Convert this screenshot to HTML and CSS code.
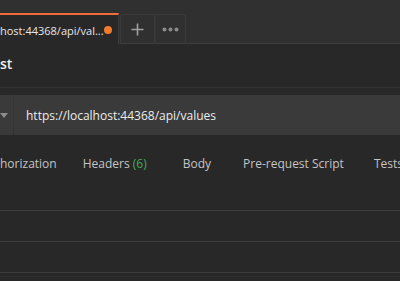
FILE: index.html
```html
<!DOCTYPE html>
<html>
<head>
<meta charset="utf-8">
<link rel="stylesheet" href="styles.css">
</head>
<body>
<div class="tabbar">
  <div class="tab active">
    <span class="tab-title">host:44368/api/val...</span>
    <span class="dot"></span>
  </div>
  <div class="tab-btn plus">
    <svg width="13" height="13" viewBox="0 0 13 13"><path d="M6.5 0.5v12M0.5 6.5h12" stroke="#a0a0a0" stroke-width="1.6"/></svg>
  </div>
  <div class="tab-btn more">
    <svg width="17" height="5" viewBox="0 0 17 5"><circle cx="2.5" cy="2.5" r="2" fill="#8a8a8a"/><circle cx="8.5" cy="2.5" r="2" fill="#8a8a8a"/><circle cx="14.5" cy="2.5" r="2" fill="#8a8a8a"/></svg>
  </div>
  <div class="tab-fill"></div>
</div>
<div class="title-row"><span class="title">st</span></div>
<div class="url-row">
  <div class="method">
    <svg width="8" height="5" viewBox="0 0 8 5"><path d="M0 0h8L4 5z" fill="#8c8c8c"/></svg>
  </div>
  <div class="url">https://localhost:44368/api/values</div>
</div>
<div class="req-tabs">
  <span class="rt rt-auth">horization</span>
  <span class="rt rt-headers">Headers <span class="count">(6)</span></span>
  <span class="rt rt-body">Body</span>
  <span class="rt">Pre-request Script</span>
  <span class="rt">Tests</span>
</div>
<div class="rows">
  <div class="row"></div>
  <div class="row"></div>
  <div class="row last"></div>
</div>
</body>
</html>
```
FILE: styles.css
```css
html, body {
  margin: 0;
  padding: 0;
  background: #282828;
  overflow: hidden;
  font-family: "Open Sans", "Noto Sans", sans-serif;
}
.tabbar {
  height: 44px;
  background: #303030;
  display: flex;
  align-items: flex-end;
}
.tab.active {
  box-sizing: border-box;
  width: 119px;
  height: 31px;
  background: #282828;
  border-top: 2px solid #f26b3a;
  border-right: 1px solid #3c3c3c;
  display: flex;
  align-items: center;
  flex-shrink: 0;
}
.tab-title {
  color: #e6e6e6;
  font-size: 11px;
  flex: 1;
  white-space: nowrap;
  padding-top: 1px;
}
.dot {
  flex-shrink: 0;
  width: 8px;
  height: 8px;
  border-radius: 50%;
  background: #f37b2e;
  margin-right: 8px;
  margin-top: 1px;
}
.tab-btn {
  box-sizing: border-box;
  height: 30px;
  width: 35px;
  border: 1px solid #3a3a3a;
  border-bottom: 1px solid #3e3e3e;
  display: flex;
  align-items: center;
  justify-content: center;
  flex-shrink: 0;
}
.tab-btn.plus {
  margin-left: 1px;
  border-radius: 3px 0 0 0;
}
.tab-btn.more {
  border-left: 1px solid #363636;
  width: 31px;
  border-radius: 0 3px 0 0;
}
.tab-fill {
  flex: 1;
  align-self: stretch;
  border-bottom: 1px solid #3e3e3e;
}
.title-row {
  height: 44px;
  box-sizing: border-box;
  border-bottom: 1px solid #333;
  display: flex;
  align-items: center;
  padding-bottom: 4px;
}
.title {
  color: #f0f0f0;
  font-size: 14px;
  font-weight: 600;
}
.url-row {
  margin-top: 7px;
  height: 40px;
  background: #3a3a3a;
  display: flex;
  align-items: center;
}
.method {
  width: 13px;
  align-self: stretch;
  border-right: 1px solid #333;
  display: flex;
  align-items: center;
}
.url {
  color: #ececec;
  font-size: 12px;
  margin-left: 12px;
}
.req-tabs {
  height: 55px;
  display: flex;
  align-items: center;
  white-space: nowrap;
  font-size: 12px;
  color: #c4c4c4;
  padding-top: 1px;
  box-sizing: border-box;
}
.rt {
  margin-right: 30px;
}
.rt-auth {
  margin-right: 26px;
}
.rt-headers {
  margin-right: 36px;
}
.rt-body {
  margin-right: 32px;
}
.count {
  color: #3fae5a;
}
.rows {
  padding-top: 20px;
}
.row {
  height: 31px;
  box-sizing: border-box;
  border-top: 1px solid #3c3c3c;
}
.row.last {
  height: 5px;
  border-bottom: 1px solid #2f2f2f;
}
```
